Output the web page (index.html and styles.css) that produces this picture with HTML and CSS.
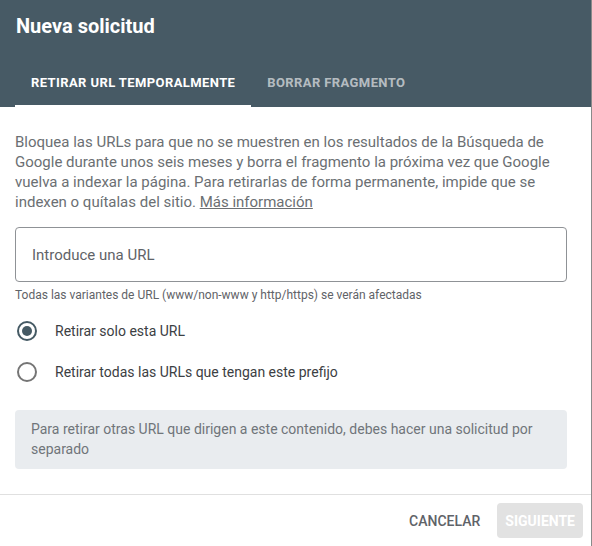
FILE: index.html
```html
<!DOCTYPE html>
<html lang="es">
<head>
<meta charset="utf-8">
<title>Nueva solicitud</title>
<link rel="stylesheet" href="styles.css">
</head>
<body>
<div class="dialog">
  <header class="dialog-header">
    <h1 class="dialog-title">Nueva solicitud</h1>
    <nav class="tabs">
      <div class="tab tab-active">RETIRAR URL TEMPORALMENTE</div>
      <div class="tab">BORRAR FRAGMENTO</div>
    </nav>
  </header>
  <main class="dialog-body">
    <p class="intro">Bloquea las URLs para que no se muestren en los resultados de la Búsqueda de Google durante unos seis meses y borra el fragmento la próxima vez que Google vuelva a indexar la página. Para retirarlas de forma permanente, impide que se indexen o quítalas del sitio. <a class="link" href="#">Más información</a></p>
    <div class="field">
      <input class="url-input" type="text" placeholder="Introduce una URL">
    </div>
    <p class="helper">Todas las variantes de URL (www/non-www y http/https) se verán afectadas</p>
    <div class="radios">
      <label class="radio-row">
        <span class="radio radio-checked"><span class="radio-dot"></span></span>
        <span class="radio-label">Retirar solo esta URL</span>
      </label>
      <label class="radio-row">
        <span class="radio"></span>
        <span class="radio-label">Retirar todas las URLs que tengan este prefijo</span>
      </label>
    </div>
    <div class="notice">Para retirar otras URL que dirigen a este contenido, debes hacer una solicitud por separado</div>
  </main>
  <footer class="dialog-footer">
    <button class="btn btn-text">CANCELAR</button>
    <button class="btn btn-disabled">SIGUIENTE</button>
  </footer>
</div>
</body>
</html>
```

FILE: styles.css
```css
* { box-sizing: border-box; }

html, body {
  margin: 0;
  padding: 0;
}

body {
  background: #8a8a8a;
  font-family: Roboto, "Liberation Sans", Arial, sans-serif;
  height: 546px;
  overflow: hidden;
}

.dialog {
  width: 591px;
  height: 546px;
  background: #ffffff;
  display: flex;
  flex-direction: column;
}

.dialog-header {
  background: #475a65;
  height: 107px;
}

.dialog-title {
  margin: 0;
  padding: 14px 16px 21px;
  font-size: 20px;
  line-height: 24px;
  font-weight: 700;
  color: #ffffff;
}

.tabs {
  display: flex;
  padding-left: 15px;
}

.tab {
  padding: 16px 16px 14px;
  font-size: 13px;
  line-height: 16px;
  font-weight: 700;
  color: rgba(255, 255, 255, 0.62);
  border-bottom: 2px solid transparent;
  letter-spacing: 0.4px;
}

.tab-active {
  color: #ffffff;
  border-bottom-color: #ffffff;
}

.dialog-body {
  flex: 1;
  padding: 0 25px 0 15px;
}

.intro {
  margin: 25px 0 0;
  font-size: 15px;
  line-height: 20px;
  color: #6b6f73;
}

.link {
  color: #6b6f73;
  text-decoration: underline;
}

.field {
  margin-top: 15px;
  width: 552px;
}

.url-input {
  display: block;
  width: 100%;
  height: 55px;
  border: 1px solid #8f9296;
  border-radius: 4px;
  padding: 0 16px;
  font-family: Roboto, "Liberation Sans", Arial, sans-serif;
  font-size: 15px;
  color: #3c4043;
  background: #fff;
  outline: none;
}

.url-input::placeholder {
  color: #5f6368;
  opacity: 1;
}

.helper {
  margin: 5px 0 0;
  font-size: 12px;
  line-height: 16px;
  color: #5f6368;
}

.radios {
  margin-top: 7px;
  display: flex;
  flex-direction: column;
}

.radio-row {
  height: 41px;
  display: flex;
  align-items: center;
  gap: 18px;
  padding-left: 2px;
}

.radio {
  width: 20px;
  height: 20px;
  border-radius: 50%;
  border: 2px solid #757575;
  display: flex;
  align-items: center;
  justify-content: center;
  flex: none;
}

.radio-checked {
  border-color: #455a64;
}

.radio-dot {
  width: 10px;
  height: 10px;
  border-radius: 50%;
  background: #455a64;
}

.radio-label {
  font-size: 14px;
  line-height: 20px;
  color: #3c4043;
}

.notice {
  margin-top: 18px;
  width: 552px;
  background: #e9ecef;
  border-radius: 4px;
  padding: 9px 16px 10px;
  font-size: 14px;
  line-height: 20px;
  color: #70757a;
}

.dialog-footer {
  border-top: 1px solid #e0e0e0;
  padding: 8px 8px 8px;
  display: flex;
  justify-content: flex-end;
  gap: 9px;
}

.btn {
  height: 35px;
  padding: 0 8px;
  border: none;
  border-radius: 4px;
  font-family: Roboto, "Liberation Sans", Arial, sans-serif;
  font-size: 14px;
  background: transparent;
}

.btn-text {
  font-weight: 500;
  color: #5f6368;
}

.btn-disabled {
  font-weight: 700;
  color: #ffffff;
  background: #e2e2e2;
}
```
